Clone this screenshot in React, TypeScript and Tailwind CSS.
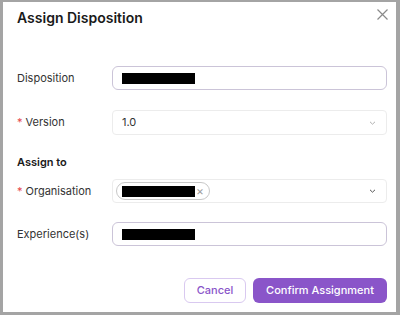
const Field = ({ label, required, children }: { label: string; required?: boolean; children: React.ReactNode }) => (
  <div className="flex items-center">
    <div className="w-[95px] shrink-0 text-[11px] text-[#333]">
      {required && <span className="text-[#e5484d] mr-[3px]">*</span>}
      {label}
    </div>
    <div className="flex-1">{children}</div>
  </div>
);

const Redacted = () => <div className="w-[73px] h-[11px] bg-black" />;

const Chevron = ({ color }: { color: string }) => (
  <svg width="7" height="4" viewBox="0 0 7 4" fill="none" stroke={color} strokeWidth="1">
    <path d="M1 0.8l2.5 2.4 2.5-2.4" />
  </svg>
);

const App = () => {
  return (
    <div className="w-[400px] h-[315px] bg-[#a4a4a4] pt-[2px] pl-[3px] pr-[4px] pb-[3px] font-['Inter',sans-serif]">
      <div className="bg-white h-full pl-[14px] pr-[9px] pt-[6px] flex flex-col">
        <div className="flex justify-between items-start">
          <h1 className="text-[14px] leading-[20px] font-semibold text-[#1a1a1a]">Assign Disposition</h1>
          <svg className="mt-[1px] -mr-[1px]" width="11" height="11" viewBox="0 0 11 11" stroke="#8a8a8a" strokeWidth="1.2">
            <path d="M0.5 0.5l10 10M10.5 0.5l-10 10" />
          </svg>
        </div>

        <div className="mt-[38px]">
          <Field label="Disposition">
            <div className="h-[24px] rounded-[6px] border border-[#cbc4d8] flex items-center px-[9px]">
              <Redacted />
            </div>
          </Field>
        </div>

        <div className="mt-[20px]">
          <Field label="Version" required>
            <div className="h-[25px] rounded-[4px] border border-[#ececec] flex items-center justify-between pl-[9px] pr-[10px] text-[11px] text-[#333]">
              <span>1.0</span>
              <Chevron color="#b0b0b0" />
            </div>
          </Field>
        </div>

        <div className="mt-[19px] text-[11px] leading-[16px] font-semibold text-[#1a1a1a]">Assign to</div>

        <div className="mt-[9px]">
          <Field label="Organisation" required>
            <div className="h-[24px] rounded-[4px] border border-[#ececec] flex items-center justify-between pl-[3px] pr-[10px]">
              <div className="h-[18px] rounded-full border border-[#c8c8c8] flex items-center pl-[5px] pr-[5px] gap-[1px]">
                <Redacted />
                <span className="text-[12px] leading-none text-[#a0a0a0]">×</span>
              </div>
              <Chevron color="#555" />
            </div>
          </Field>
        </div>

        <div className="mt-[19px]">
          <Field label="Experience(s)">
            <div className="h-[24px] rounded-[6px] border border-[#cbc4d8] flex items-center px-[9px]">
              <Redacted />
            </div>
          </Field>
        </div>

        <div className="mt-[32px] flex justify-end gap-[7px]">
          <button className="h-[25px] w-[62px] rounded-[6px] border border-[#d9c9f0] text-[11px] font-medium text-[#8a55c9]">
            Cancel
          </button>
          <button className="h-[25px] w-[134px] rounded-[6px] bg-[#8a55c9] text-[11px] font-medium text-white">
            Confirm Assignment
          </button>
        </div>
      </div>
    </div>
  );
};

export default App;
